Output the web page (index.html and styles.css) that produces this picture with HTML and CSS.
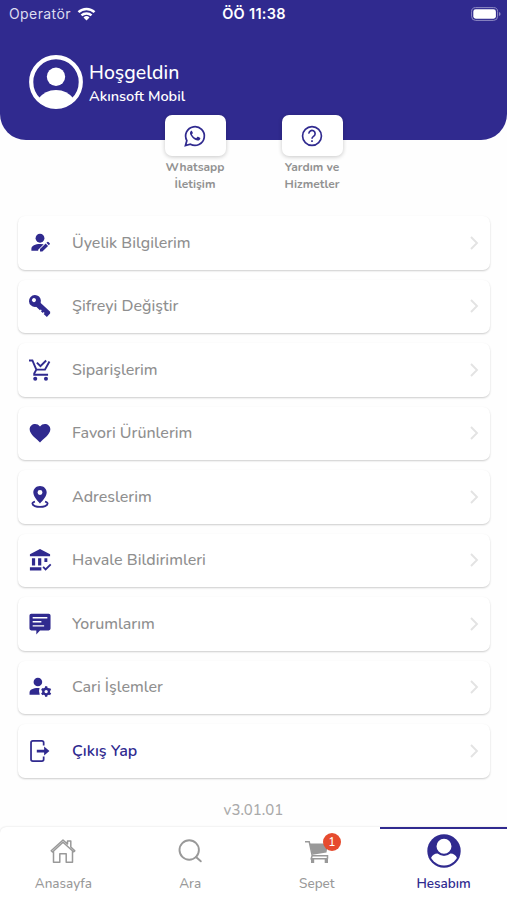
FILE: index.html
```html
<!DOCTYPE html>
<html lang="tr">
<head>
<meta charset="utf-8">
<title>Hesabım</title>
<link rel="stylesheet" href="styles.css">
</head>
<body>
<div class="app">
  <header class="header">
    <div class="status">
      <div class="carrier"><span>Operatör</span>
        <svg class="wifi" viewBox="0 0 18 14" fill="none" stroke="#fff" stroke-width="2.5"><path d="M1 5.2a11.4 11.4 0 0 1 16 0M4 8.4a7.2 7.2 0 0 1 10 0"/><path d="M9 13.5 6 10.5a4.3 4.3 0 0 1 6 0z" fill="#fff" stroke="none"/></svg>
      </div>
      <div class="clock">ÖÖ 11:38</div>
      <svg class="battery" viewBox="0 0 30 14"><rect x=".6" y=".6" width="26" height="12.8" rx="4" fill="none" stroke="#8f8bc4"/><rect x="2.3" y="2.3" width="22.6" height="9.4" rx="2.4" fill="#fff"/><path d="M28 5v4q1.6-.5 1.6-2T28 5z" fill="#8f8bc4"/></svg>
    </div>
    <div class="profile">
      <svg class="avatar" viewBox="0 0 54 54"><clipPath id="face"><circle cx="27" cy="27" r="26"/></clipPath><circle cx="27" cy="27" r="24.8" fill="none" stroke="#fff" stroke-width="4.2"/><circle cx="27" cy="21.8" r="9.2" fill="#fff"/><path d="M9 44q7-9 18-9t18 9v10H9z" fill="#fff" clip-path="url(#face)"/></svg>
      <div class="names"><div class="hello">Hoşgeldin</div><div class="user">Akınsoft Mobil</div></div>
    </div>
  </header>

  <section class="quick">
    <div class="quick-item">
      <div class="quick-card"><svg class="quick-icon" viewBox="0 0 24 24"><path fill="none" stroke="currentColor" stroke-width="1.900" d="M1.600 22.400 3.100 17A10.200 10.200 0 1 1 7 20.900z"/><path fill="currentColor" d="M8.800 6.700c-.3-.6-.9-.6-1.300-.2-1.300 1.300-1.300 3 0 4.900 1.900 3 4.400 5 7.200 5.500 1.500.2 2.900-.7 3.100-2.200.1-.5 0-.6-.4-.8l-2.100-1c-.4-.2-.6-.1-.9.3l-.8 1c-.2.2-.4.2-.8.1-1.800-.8-3-1.900-4-3.600-.2-.3-.1-.5.1-.8l.7-.9c.1-.2.1-.4 0-.6z"/></svg></div>
      <div class="quick-label">Whatsapp<br>İletişim</div>
    </div>
    <div class="quick-item">
      <div class="quick-card"><svg class="quick-icon" viewBox="0 0 24 24" fill="none" stroke="currentColor" stroke-width="1.800"><circle cx="12" cy="12" r="10.300"/><path d="M8.600 9.400a3.400 3.400 0 1 1 5.400 2.700c-1.200.9-2 1.300-2 2.800"/><path d="M12 16.600v2"/></svg></div>
      <div class="quick-label">Yardım ve<br>Hizmetler</div>
    </div>
  </section>

  <main class="menu">
    <div class="row"><svg class="icon" viewBox="0 0 24 24" fill="currentColor"><circle cx="12" cy="6.800" r="4.800"/><path d="M2.600 20.500v-2.300C2.600 15 7 13 12 13q2.300 0 4 .4L10 19.300v1.200zM12 21.300v-2.700l6.200-6 2.600 2.600-6.200 6.100zM19 11.800l1-1q.6-.5 1.200 0l1.400 1.400q.5.600 0 1.200l-1 1z"/></svg><span class="label">Üyelik Bilgilerim</span><svg class="chev" viewBox="0 0 10 14"><path d="m2 1 6 6-6 6"/></svg></div>
    <div class="row"><svg class="icon" viewBox="0 0 24 24"><g transform="rotate(43 7 7)"><circle cx="6.300" cy="7" r="6.500" fill="currentColor"/><path fill="currentColor" d="M10 4.300h16.500l1.300 1.500v5.200h-4.800V9.400h-1.500v1.300h-2.800V9.400h-1.500v1.300H10z"/><circle cx="4.800" cy="7" r="2.200" fill="#fff"/></g></svg><span class="label">Şifreyi Değiştir</span><svg class="chev" viewBox="0 0 10 14"><path d="m2 1 6 6-6 6"/></svg></div>
    <div class="row"><svg class="icon" viewBox="0 0 24 24"><path fill="none" stroke="currentColor" stroke-width="2.100" d="M0 1.600h3.700l4.300 10h9.400l4.900-8.800M8 11.600l-2.300 4.200v1.400H20.800M8.600 3.900l3.900 3.900L18.700 1.600"/><circle cx="6.800" cy="21.500" r="2.200" fill="currentColor"/><circle cx="18.500" cy="21.500" r="2.200" fill="currentColor"/></svg><span class="label">Siparişlerim</span><svg class="chev" viewBox="0 0 10 14"><path d="m2 1 6 6-6 6"/></svg></div>
    <div class="row"><svg class="icon" viewBox="0 0 24 24"><path fill="currentColor" d="M12 22.300C9 19.100.7 13.600.7 8c0-5.800 7.800-8 11.300-3 3.500-5 11.300-2.800 11.300 3 0 5.600-8.300 11.100-11.300 14.300z"/></svg><span class="label">Favori Ürünlerim</span><svg class="chev" viewBox="0 0 10 14"><path d="m2 1 6 6-6 6"/></svg></div>
    <div class="row"><svg class="icon" viewBox="0 0 24 24"><path fill="currentColor" fill-rule="evenodd" d="M12 0c4.300 0 7.300 3.200 7.300 7.100C19.300 12.300 12 19 12 19S4.700 12.300 4.700 7.100C4.700 3.200 7.700 0 12 0zm0 4.300a2.700 2.700 0 1 0 0 5.400 2.700 2.700 0 0 0 0-5.400z"/><path fill="none" stroke="currentColor" stroke-width="2" d="M6.500 17c-2 .5-2.800 1.300-2.800 2.200C3.700 21.500 8 22.800 12 22.800s8.300-1.300 8.300-3.600c0-.9-.8-1.700-2.800-2.200"/></svg><span class="label">Adreslerim</span><svg class="chev" viewBox="0 0 10 14"><path d="m2 1 6 6-6 6"/></svg></div>
    <div class="row"><svg class="icon" viewBox="0 0 24 24"><path fill="currentColor" d="M12 0 1 5.600V8h22V5.600zM3.200 10h3.500v8H3.200zM9.900 10h3.500v8H9.900zM16.800 10h3.200v4.300h-3.200zM1 20h12.500v3.400H1z"/><path fill="none" stroke="currentColor" stroke-width="2" d="m15.400 19.600 2.700 2.700 5.600-5.600"/></svg><span class="label">Havale Bildirimleri</span><svg class="chev" viewBox="0 0 10 14"><path d="m2 1 6 6-6 6"/></svg></div>
    <div class="row"><svg class="icon" viewBox="0 0 24 24"><path fill="currentColor" d="M2.500.7h19Q23.500.7 23.500 2.700v14.300q0 2-2 2H12L8 23.500V19H2.500q-2 0-2-2V2.700q0-2 2-2z"/><path stroke="#fff" stroke-width="1.500" d="M4 5.200h16M4 9.600h9.500M4 14h12.500"/></svg><span class="label">Yorumlarım</span><svg class="chev" viewBox="0 0 10 14"><path d="m2 1 6 6-6 6"/></svg></div>
    <div class="row"><svg class="icon" viewBox="0 0 24 24"><circle cx="9.700" cy="6.500" r="4.700" fill="currentColor"/><path fill="currentColor" d="M.6 20.400v-2.500c0-3.200 5-5.200 10.900-4.700q-1.300 3.400.2 7.200z"/><circle cx="18.700" cy="17" r="3.100" fill="none" stroke="currentColor" stroke-width="2.500"/><path fill="none" stroke="currentColor" stroke-width="2.500" d="M18.700 11.300v3M18.700 19.700v3M13.800 14.200l2.600 1.500M21 18.300l2.600 1.500M13.800 19.800l2.600-1.500M21 15.700l2.600-1.500"/></svg><span class="label">Cari İşlemler</span><svg class="chev" viewBox="0 0 10 14"><path d="m2 1 6 6-6 6"/></svg></div>
    <div class="row exit"><svg class="icon" viewBox="0 0 24 24"><path fill="none" stroke="currentColor" stroke-width="1.900" d="M16 6V3Q16 1 14 1H4.200q-2 0-2 2v18q0 2 2 2H14q2 0 2-2V18"/><path fill="currentColor" d="M8.500 10.500h8V7.200L22.300 12l-5.800 4.800v-3.300h-8z"/></svg><span class="label">Çıkış Yap</span><svg class="chev" viewBox="0 0 10 14"><path d="m2 1 6 6-6 6"/></svg></div>
  </main>

  <div class="version">v3.01.01</div>

  <nav class="tabs">
    <div class="tab"><div class="tab-pic"><svg class="i26" viewBox="0 0 26 26" fill="none" stroke="currentColor" stroke-width="1.500" stroke-linejoin="round"><path d="M3.500 13v11.200h6.300v-8.500h6.400v8.500h6.300V13M1.200 12.800 13 2l4.500 4V3h3.300v6l4 3.800-1.300 1L13 4.200 2.500 14z"/></svg></div><span>Anasayfa</span></div>
    <div class="tab"><div class="tab-pic"><svg class="i26" viewBox="0 0 26 26" fill="none" stroke="currentColor" stroke-width="1.900" stroke-linecap="round"><circle cx="12.200" cy="12" r="9.700"/><path d="m19 19 4.800 4.300"/></svg></div><span>Ara</span></div>
    <div class="tab"><div class="tab-pic"><svg class="i26" viewBox="0 0 26 26"><path fill="currentColor" d="M5.500 5.500H24L22.500 14.500 8.500 16.800z"/><path fill="none" stroke="currentColor" stroke-width="1.500" d="M1 3.700h4.200l3 13.800-1 3.300H23.500M7.500 17.800h16v3"/><path fill="currentColor" d="M7 20.300h3.200V25H7zM20.700 20.300H24V25h-3.300z"/></svg><b class="badge">1</b></div><span>Sepet</span></div>
    <div class="tab active"><div class="tab-pic"><svg class="i34" viewBox="0 0 34 34"><clipPath id="tabface"><circle cx="17" cy="17" r="14.600"/></clipPath><circle cx="17" cy="17" r="16.700" fill="currentColor"/><path fill="#fff" clip-path="url(#tabface)" d="M4 24q2-4.500 6.500-4.500Q17 24 23.500 19.500 28 19.500 30 24v10H4z"/><circle cx="17" cy="12.300" r="8.300" fill="#fff" stroke="currentColor" stroke-width="1.600"/></svg></div><span>Hesabım</span></div>
  </nav>
</div>
</body>
</html>
```
FILE: styles.css
```css
* { box-sizing: border-box; }
body { margin: 0; background: #fefefe; font-family: Nunito, Lato, "Noto Sans", sans-serif; font-weight: 500; }
svg { display: block; flex: none; overflow: visible; }
.app { width: 507px; height: 900px; overflow: hidden; display: flex; flex-direction: column; }
.header { height: 139.500px; flex: none; background: #302a8f; color: #fff; border-radius: 0 0 26px 26px; }
.status { height: 28px; display: grid; grid-template-columns: 1fr auto 1fr; align-items: center; padding: 0 6px 1px 9px; font-family: Inter, sans-serif; font-size: 14px; }
.carrier { display: flex; align-items: center; gap: 6px; color: #dddcf0; font-weight: 400; letter-spacing: .4px; }
.wifi { width: 19px; height: 14px; }
.clock { font-size: 14.500px; font-weight: 600; letter-spacing: .3px; margin-right: 2px; }
.battery { width: 30px; height: 14px; justify-self: end; }
.profile { display: flex; align-items: center; padding: 27px 0 0 29px; gap: 6px; }
.avatar { width: 54px; height: 54px; }
.hello { font-size: 19.500px; line-height: 25px; padding-top: 1px; }
.user { font-size: 14.500px; line-height: 20px; margin-top: 1px; font-weight: 600; }
.quick { display: flex; justify-content: center; gap: 31px; margin-top: -24.500px; height: 101px; flex: none; position: relative; }
.quick-item { width: 86px; display: flex; flex-direction: column; align-items: center; }
.quick-card { width: 61px; height: 41px; flex: none; border-radius: 7px; background: #fff; box-shadow: 0 1px 4px rgba(0,0,0,.22); display: grid; place-items: center; color: #302a8f; }
.quick-icon { width: 22px; height: 22px; }
.quick-label { margin-top: 3px; text-align: center; font-size: 12px; line-height: 16.500px; font-weight: 700; color: #929292; }
.menu { display: flex; flex-direction: column; gap: 10px; padding: 0 17px 0 18px; flex: none; }
.row { height: 53.500px; flex: none; display: flex; align-items: center; padding: 0 11px 0 11px; border-radius: 7px; background: #fff; box-shadow: 0 1px 2px rgba(0,0,0,.2); color: #302a8f; }
.icon { width: 22px; height: 22px; }
.label { margin-left: 21px; font-size: 16px; color: #8f8f8f; flex: 1; white-space: nowrap; }
.exit .label { color: #302a8f; font-weight: 600; }
.chev { width: 10px; height: 14px; fill: none; stroke: #e3e3e3; stroke-width: 1.900; }
.version { height: 49px; flex: none; padding-top: 22px; text-align: center; font-size: 15px; line-height: 20px; color: #aaa; }
.tabs { height: 74px; flex: none; display: grid; grid-template-columns: repeat(4, 1fr); background: #fff; box-shadow: 0 0 2px rgba(0,0,0,.16); border-radius: 6px 0 0 0; }
.tab { display: flex; flex-direction: column; align-items: center; border-top: 2px solid transparent; color: #999; font-size: 13.500px; line-height: 18px; }
.tab-pic { height: 44px; display: flex; align-items: center; position: relative; margin-bottom: 2px; }
.i26 { width: 26px; height: 26px; }
.i34 { width: 34px; height: 34px; }
.active { border-color: #302a8f; color: #302a8f; font-weight: 600; }
.badge { position: absolute; left: 19px; top: 4px; width: 18px; height: 18px; border-radius: 50%; background: #e64b2e; color: #fff; font-size: 12px; line-height: 18px; text-align: center; font-weight: 500; }
```
